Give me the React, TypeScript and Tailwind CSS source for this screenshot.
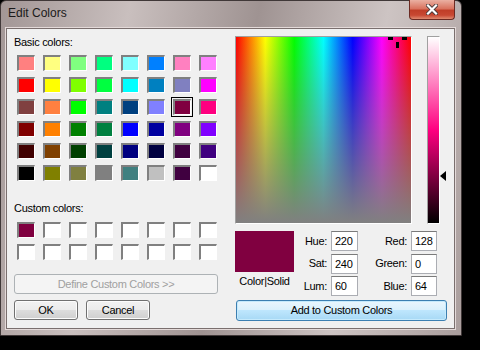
const BASIC = [
  ['#ff8080', '#ffff80', '#80ff80', '#00ff80', '#80ffff', '#0080ff', '#ff80c0', '#ff80ff'],
  ['#ff0000', '#ffff00', '#80ff00', '#00ff40', '#00ffff', '#0080c0', '#8080c0', '#ff00ff'],
  ['#804040', '#ff8040', '#00ff00', '#008080', '#004080', '#8080ff', '#800040', '#ff0080'],
  ['#800000', '#ff8000', '#008000', '#008040', '#0000ff', '#0000a0', '#800080', '#8000ff'],
  ['#400000', '#804000', '#004000', '#004040', '#000080', '#000040', '#400040', '#400080'],
  ['#000000', '#808000', '#808040', '#808080', '#408080', '#c0c0c0', '#400040', '#ffffff'],
];

const CUSTOM = ['#800040', ...Array(15).fill('#ffffff')];

const FONT = "[font-family:'Liberation_Sans',Arial,sans-serif]";

function Swatch({ color, selected }: { color: string; selected?: boolean }) {
  return (
    <div className={`w-[22px] h-[20px] flex items-center justify-center ${selected ? 'border border-black' : ''}`}>
      <div
        className="w-[18px] h-[16px] border-t-2 border-l-2 border-r border-b border-t-[#808080] border-l-[#808080] border-r-white border-b-white"
        style={{ backgroundColor: color }}
      />
    </div>
  );
}

function Field({ label, value, labelW, inputW }: { label: string; value: string; labelW: string; inputW: string }) {
  return (
    <div className="flex items-center">
      <span className={`${labelW} text-right`}>{label}</span>
      <div className={`${inputW} ml-[4px] h-[20px] bg-white border border-[#abadb3] border-t-[#7a7a7a] pl-[3px] leading-[18px]`}>{value}</div>
    </div>
  );
}

export default function App() {
  return (
    <div className={`w-[480px] h-[350px] bg-black text-[11px] tracking-[-0.3px] text-black ${FONT}`}>
      <div className="w-[462px] h-[336px] rounded-t-[6px] border border-[#403838] bg-[linear-gradient(100deg,#a29695,#c9bfbe_25%,#9f9392_50%,#cdc4c3_75%,#aa9e9d)] flex flex-col">
        {/* title bar */}
        <div className="h-[27px] flex items-start justify-between">
          <span className="pl-[7px] pt-[5px] text-[12px] leading-[15px] tracking-normal text-[#1a1a1a]">Edit Colors</span>
          <div className="mr-[6px] -mt-px w-[46px] h-[20px] rounded-b-[4px] border border-[#6b2a22] border-t-0 bg-[linear-gradient(to_bottom,#eab0a2,#d9735f_45%,#c03e28_55%,#c84832_80%,#df8a70)] flex items-center justify-center">
            <svg width="12" height="11" viewBox="0 0 12 11">
              <path d="M2 1.5 L10 9.5 M10 1.5 L2 9.5" stroke="#4a3a3a" strokeWidth="4" strokeLinecap="square" />
              <path d="M2 1.5 L10 9.5 M10 1.5 L2 9.5" stroke="#ffffff" strokeWidth="2.2" strokeLinecap="square" />
            </svg>
          </div>
        </div>

        {/* client area */}
        <div className="ml-[5px] w-[449px] h-[301px] bg-[#f0f0f0] border border-[#7a6f6e] shadow-[0_0_0_1px_#e4dad9] flex pl-[7px] pt-[6px]">
          {/* left column */}
          <div className="w-[205px] flex flex-col">
            <div className="leading-[15px] pl-[-1px]">Basic colors:</div>
            <div className="mt-[3px] ml-px grid grid-cols-[repeat(8,22px)] gap-x-[4px] gap-y-[2px]">
              {BASIC.flat().map((c, i) => (
                <Swatch key={i} color={c} selected={i === 22} />
              ))}
            </div>
            <div className="mt-[18px] leading-[15px]">Custom colors:</div>
            <div className="mt-[4px] ml-px grid grid-cols-[repeat(8,22px)] gap-x-[4px] gap-y-[2px]">
              {CUSTOM.map((c, i) => (
                <Swatch key={i} color={c} />
              ))}
            </div>
            <div className="mt-[12px] h-[20px] w-[204px] rounded-[3px] border border-[#adb2b5] bg-[#f4f4f4] flex items-center justify-center text-[#a0a0a0]">
              Define Custom Colors &gt;&gt;
            </div>
            <div className="mt-[6px] flex gap-[8px]">
              {['OK', 'Cancel'].map(t => (
                <div key={t} className="w-[64px] h-[20px] rounded-[3px] border border-[#707070] bg-[linear-gradient(to_bottom,#f2f2f2,#ebebeb_50%,#dddddd_50%,#cfcfcf)] shadow-[inset_0_0_0_1px_#fcfcfc] flex items-center justify-center">
                  {t}
                </div>
              ))}
            </div>
          </div>

          {/* right column */}
          <div className="ml-[16px] w-[212px] flex flex-col">
            <div className="mt-px flex items-start">
              <div className="relative w-[177px] h-[188px] border border-t-[#a0a0a0] border-l-[#a0a0a0] border-r-white border-b-white bg-[linear-gradient(to_right,#ff0000,#ffff00_16.7%,#00ff00_33.3%,#00ffff_50%,#0000ff_66.7%,#ff00ff_83.3%,#ff0000)]">
                <div className="absolute inset-0 bg-[linear-gradient(to_bottom,rgba(128,128,128,0),#808080)]" />
                {/* crosshair */}
                <div className="absolute left-[152px] top-0 w-[5px] h-[3px] bg-black" />
                <div className="absolute left-[166px] top-0 w-[5px] h-[3px] bg-black" />
                <div className="absolute left-[160px] top-[5px] w-[3px] h-[6px] bg-black" />
              </div>
              <div className="relative ml-[15px] w-[13px] h-[188px] border border-t-[#a0a0a0] border-l-[#a0a0a0] border-r-white border-b-white bg-[linear-gradient(to_bottom,#ffffff,#ff0080_50%,#000000)]">
                <div className="absolute left-[12px] top-[134px] w-0 h-0 border-y-[5px] border-y-transparent border-r-[6px] border-r-black" />
              </div>
            </div>

            <div className="mt-[7px] flex items-start">
              <div className="w-[59px] flex flex-col items-center">
                <div className="w-[59px] h-[41px] bg-[#800040]" />
                <div className="mt-[2px] leading-[15px]">Color|Solid</div>
              </div>
              <div className="flex flex-col gap-[2.5px]">
                <div className="flex">
                  <Field label="Hue:" value="220" labelW="w-[33px]" inputW="w-[27px]" />
                  <Field label="Red:" value="128" labelW="w-[49px]" inputW="w-[26px]" />
                </div>
                <div className="flex">
                  <Field label="Sat:" value="240" labelW="w-[33px]" inputW="w-[27px]" />
                  <Field label="Green:" value="0" labelW="w-[49px]" inputW="w-[26px]" />
                </div>
                <div className="flex">
                  <Field label="Lum:" value="60" labelW="w-[33px]" inputW="w-[27px]" />
                  <Field label="Blue:" value="64" labelW="w-[49px]" inputW="w-[26px]" />
                </div>
              </div>
            </div>

            <div className="mt-[4px] ml-px w-[211px] h-[21px] rounded-[3px] border border-[#3c7fb1] bg-[linear-gradient(to_bottom,#eaf6fd,#d9f0fc_50%,#bee6fd_50%,#a7d9f5)] shadow-[inset_0_0_0_1px_#c6eafc] flex items-center justify-center">
              Add to Custom Colors
            </div>
          </div>
        </div>
      </div>
    </div>
  );
}
